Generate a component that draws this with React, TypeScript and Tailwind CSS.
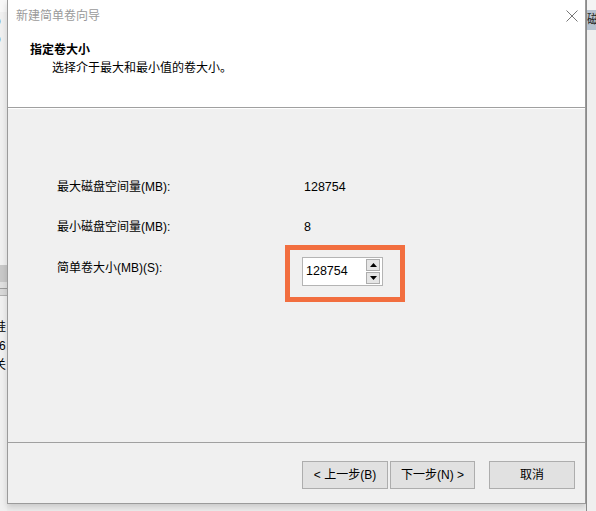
import React, { useState } from "react"

const font = "font-['Liberation_Sans','Noto_Sans_CJK_SC',sans-serif]"

const Spinner = ({ value, onChange }: { value: number; onChange: (v: number) => void }) => {
    return (
        <div className="relative mt-[10px]">
            {/* orange annotation box */}
            <div className="absolute left-[-17px] top-[-12px] w-[120px] h-[57px] border-[5px] border-[#f26e3f]" />
            <div className="flex w-[81px] h-[29px] border border-[#b4b4b4] bg-white">
                <input
                    value={value}
                    onChange={(e) => onChange(Number(e.target.value) || 0)}
                    className="w-[62px] pl-[3px] text-[12.5px] leading-[27px] text-black outline-none bg-transparent"
                />
                <div className="flex flex-col gap-[1px] pt-[1px] pl-[1px]">
                    <button
                        onClick={() => onChange(value + 1)}
                        className="w-[14px] h-[12px] flex items-center justify-center bg-[#e5e5e5] border border-[#adadad]"
                    >
                        <svg width="7" height="4" viewBox="0 0 7 4">
                            <path d="M3.5 0 L7 4 L0 4 Z" fill="#000" />
                        </svg>
                    </button>
                    <button
                        onClick={() => onChange(Math.max(8, value - 1))}
                        className="w-[14px] h-[12px] flex items-center justify-center bg-[#e5e5e5] border border-[#adadad]"
                    >
                        <svg width="7" height="4" viewBox="0 0 7 4">
                            <path d="M0 0 L7 0 L3.5 4 Z" fill="#000" />
                        </svg>
                    </button>
                </div>
            </div>
        </div>
    )
}

const WizardButton = ({ label, w }: { label: string; w: string }) => (
    <button className={`${w} h-[28px] bg-[#e1e1e1] border border-[#adadad] text-[12px] text-black leading-[26px]`}>
        {label}
    </button>
)

const App = () => {
    const [size, setSize] = useState(128754)

    return (
        <div className={`w-[596px] h-[511px] flex bg-[#ececec] overflow-hidden ${font}`}>
            {/* left strip: window behind */}
            <div className="w-[7px] h-full bg-[#f0f0f0] overflow-hidden flex flex-col text-[12px] text-[#444]">
                <div className="h-[12px] bg-[#f7f7f7]" />
                <div className="ml-[-6px] leading-[18px]">o</div>
                <div className="ml-[-6px] leading-[18px]">o</div>
                <div className="h-[217px]" />
                <div className="h-[17px] bg-[#c8c8c8]" />
                <div className="h-[6px] bg-[#e0e0e0]" />
                <div className="h-[1px] bg-[#9c9c9c]" />
                <div className="h-[6px] bg-[#d8d8d8]" />
                <div className="h-[1px] bg-[#b0b0b0]" />
                <div className="h-[22px]" />
                <div className="ml-[-6px] leading-[19px] text-black">硅</div>
                <div className="ml-[-1px] leading-[19px] text-black">6</div>
                <div className="ml-[-6px] leading-[19px] text-black">关</div>
            </div>

            {/* dialog */}
            <div className="w-[579px] h-[504px] flex flex-col border-l border-r border-b border-[#9b9b9b] bg-white shadow-[0_3px_6px_rgba(0,0,0,0.15)]">
                {/* title bar */}
                <div className="h-[30px] flex items-center justify-between pl-[8px] pr-[7px]">
                    <span className="text-[12px] text-[#9a9a9a] leading-[16px] pt-[2px]">新建简单卷向导</span>
                    <svg width="12" height="12" viewBox="0 0 12 12" className="mt-[1px]">
                        <path d="M0.5 0.5 L11.5 11.5 M11.5 0.5 L0.5 11.5" stroke="#777" strokeWidth="1" />
                    </svg>
                </div>

                {/* header */}
                <div className="h-[78px] border-b border-[#a0a0a0] pt-[11px]">
                    <div className="pl-[22px] text-[12px] font-bold text-black leading-[18px]">指定卷大小</div>
                    <div className="pl-[44px] text-[12px] text-black leading-[18px]">
                        选择介于最大和最小值的卷大小。
                    </div>
                </div>

                {/* body */}
                <div className="flex-1 bg-[#f0f0f0] border-t border-white pt-[58px] pl-[49px]">
                    <div className="flex h-[40px] items-center text-[12px] text-black">
                        <span className="w-[247px]">最大磁盘空间量(MB):</span>
                        <span className="text-[12.5px]">128754</span>
                    </div>
                    <div className="flex h-[40px] items-center text-[12px] text-black">
                        <span className="w-[247px]">最小磁盘空间量(MB):</span>
                        <span className="text-[12.5px]">8</span>
                    </div>
                    <div className="flex items-start text-[12px] text-black">
                        <span className="w-[245px] pt-[12px] leading-[18px]">简单卷大小(MB)(S):</span>
                        <Spinner value={size} onChange={setSize} />
                    </div>
                </div>

                {/* footer */}
                <div className="h-[61px] bg-[#f0f0f0] border-t border-[#a0a0a0] flex justify-end items-start pt-[18px] pr-[10px]">
                    <div className="flex gap-[2px]">
                        <WizardButton label="< 上一步(B)" w="w-[86px]" />
                        <WizardButton label="下一步(N) >" w="w-[85px]" />
                    </div>
                    <div className="ml-[14px]">
                        <WizardButton label="取消" w="w-[86px]" />
                    </div>
                </div>
            </div>

            {/* right strip: window behind */}
            <div className="w-[10px] h-full flex flex-col bg-[#efefef] border-l border-[#8a8a8a] overflow-hidden">
                <div className="h-[10px] bg-[#f4f4f4]" />
                <div className="h-[20px] bg-[#b6c2cf] overflow-hidden text-[12px] leading-[20px] text-[#222]">磁</div>
            </div>
        </div>
    )
}

export default App
